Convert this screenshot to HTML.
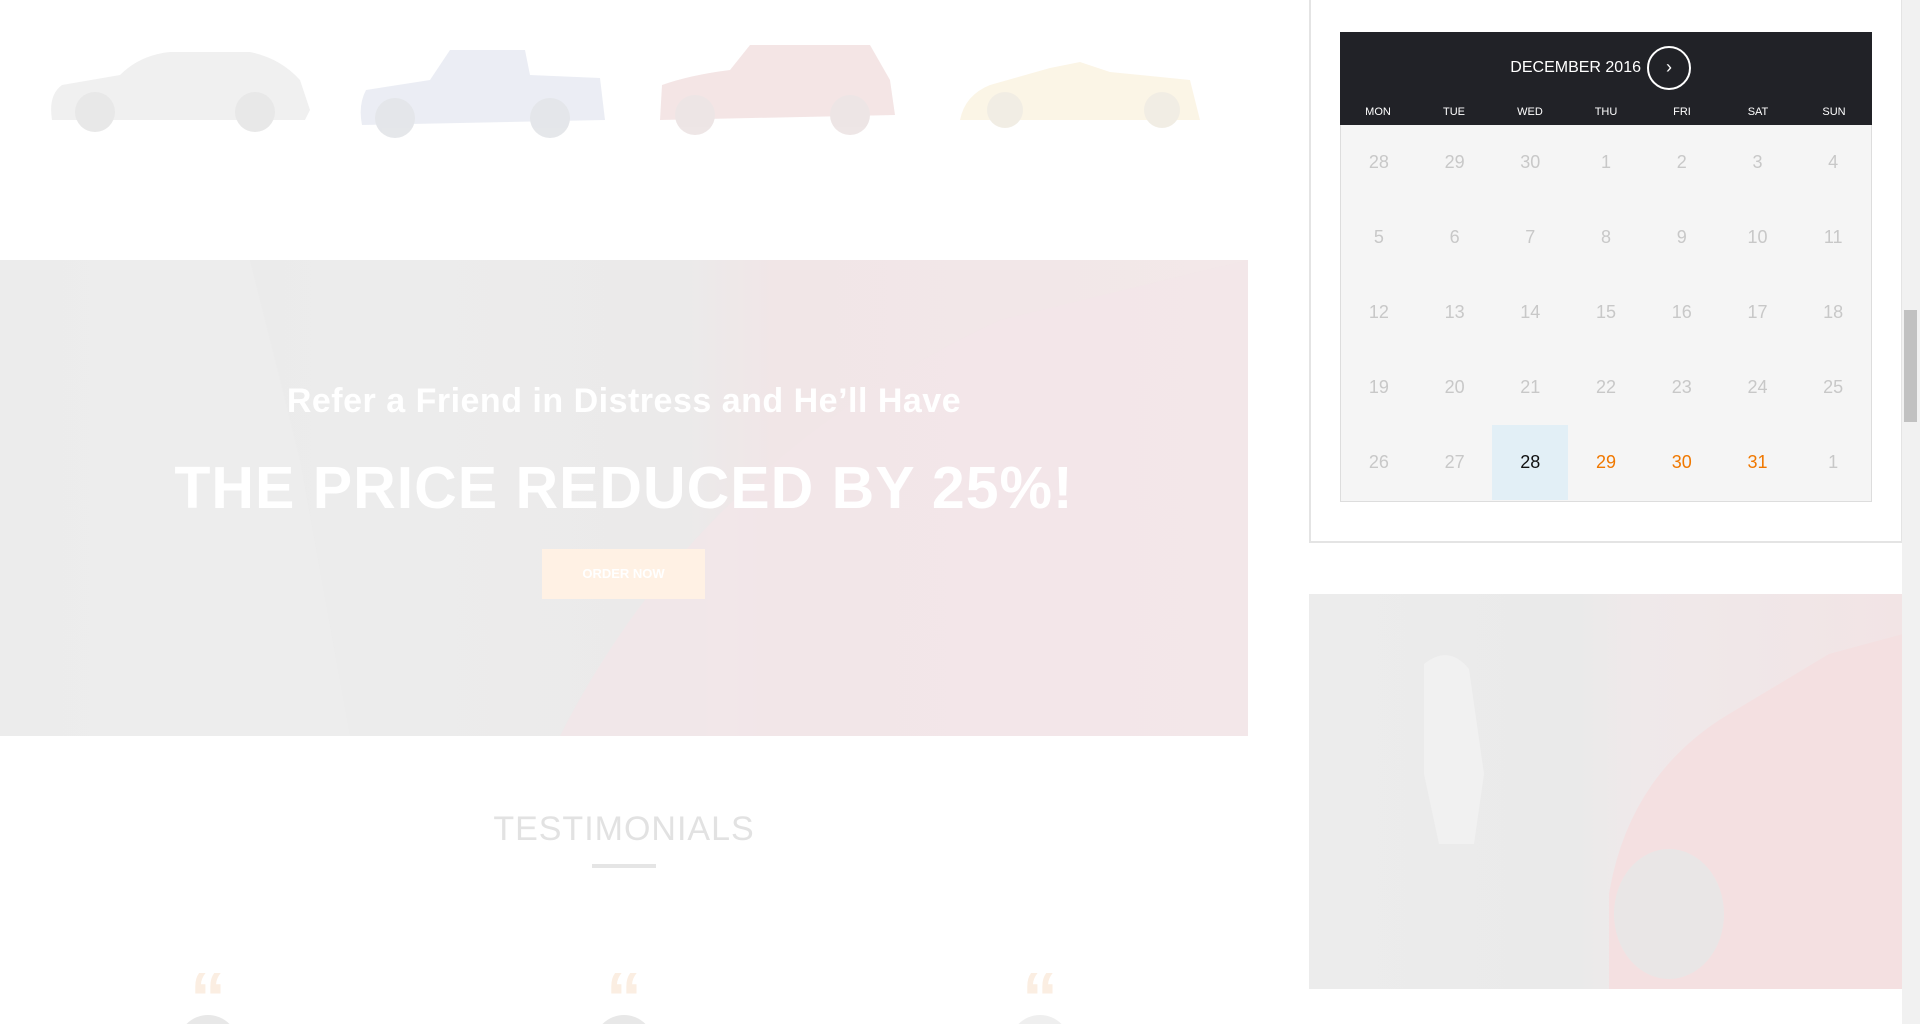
<!DOCTYPE html>
<html><head><meta charset="utf-8"><style>
*{margin:0;padding:0;box-sizing:border-box}
html,body{width:1920px;height:1024px;overflow:hidden}
body{background:#fff;font-family:"Liberation Sans",sans-serif;position:relative}
.abs{position:absolute}
.banner{left:0;top:260px;width:1248px;height:476px;background:linear-gradient(90deg,#e9e9e9 0%,#ececec 30%,#ebeaea 55%,#f1e6e7 62%,#f3e8e9 100%);overflow:hidden}
.t1{left:0;width:1248px;top:382px;text-align:center;color:#fff;font-size:34px;font-weight:bold;letter-spacing:0.5px}
.t2{left:0;width:1248px;top:454px;text-align:center;color:#fff;font-size:59px;font-weight:bold;letter-spacing:1px}
.btn{left:542px;top:549px;width:163px;height:50px;background:#fff1e4;color:#fff;font-size:13px;font-weight:bold;text-align:center;line-height:50px}
.test{left:0;width:1248px;top:810px;text-align:center;font-size:34px;color:#e2e2e2;letter-spacing:1px}
.uline{left:592px;top:864px;width:64px;height:4px;background:#e5e5e5}
.q{font-size:72px;font-weight:bold;color:#fbeee2;top:963px;font-family:"Liberation Sans",sans-serif;line-height:1}
.av{width:60px;height:60px;border-radius:50%;background:#e8e8e8;top:1015px}
.box{left:1309px;top:0;width:594px;height:543px;border:2px solid #e4e4e4;border-top:none}
.cal{left:1340px;top:32px;width:532px}
.hd{background:#212227;height:93px;position:relative;color:#fff}
.mon{position:absolute;left:0;width:301px;top:27px;text-align:right;font-size:16px}
.circ{position:absolute;left:307px;top:14px;width:44px;height:44px;border:2px solid #fff;border-radius:50%;text-align:center;line-height:38px;font-size:18px}
.dn{position:absolute;top:74px;left:0;width:100%;display:flex;font-size:11px}
.dn div,.row div{flex:1;text-align:center}
.grid{background:#f5f5f5;border:1px solid #ddd;border-top:none;height:377px}
.row{display:flex;height:75px;line-height:75px;font-size:18px;color:#c8c8c8}
.row .sel{background:#e2eff6;color:#111}
.row .o{color:#f07800}
.img{left:1309px;top:594px;width:594px;height:395px;background:linear-gradient(90deg,#ececec 0%,#eaeaea 45%,#efe9ea 55%,#f2e4e5 100%);overflow:hidden}
.sb{left:1902px;top:0;width:18px;height:1024px;background:#f1f1f1}
.th{left:1904px;top:310px;width:13px;height:112px;background:#c1c1c1}
</style></head><body>
<svg class="abs" style="left:0;top:0" width="1250" height="180">
<g opacity="0.9">
<path d="M52 120 Q48 95 62 85 L120 75 Q140 55 170 52 L250 52 Q280 58 300 80 L310 110 L305 120 Z" fill="#efefef"/>
<ellipse cx="95" cy="112" rx="20" ry="20" fill="#e6e6e6"/><ellipse cx="255" cy="112" rx="20" ry="20" fill="#e6e6e6"/>
<path d="M362 125 Q358 105 366 90 L430 80 L450 50 L525 50 L530 75 L600 78 L605 120 Z" fill="#e9ecf3"/>
<ellipse cx="395" cy="118" rx="20" ry="20" fill="#e2e4e8"/><ellipse cx="550" cy="118" rx="20" ry="20" fill="#e2e4e8"/>
<path d="M660 120 L662 85 Q690 75 730 70 L750 45 L870 45 L890 80 L895 115 Z" fill="#f3e3e3"/>
<ellipse cx="695" cy="115" rx="20" ry="20" fill="#ece3e3"/><ellipse cx="850" cy="115" rx="20" ry="20" fill="#ece3e3"/>
<path d="M960 120 Q965 95 990 85 L1050 68 L1080 62 L1110 72 L1190 80 L1200 120 Z" fill="#fbf4e4"/>
<ellipse cx="1005" cy="110" rx="18" ry="18" fill="#f0ece2"/><ellipse cx="1162" cy="110" rx="18" ry="18" fill="#f0ece2"/>
</g></svg>
<div class="abs banner">
<svg width="1248" height="476"><path d="M0 0 L250 0 L300 200 L350 476 L0 476 Z" fill="#efefef" opacity="0.6"/><path d="M560 476 Q700 200 1000 60 L1248 0 L1248 476 Z" fill="#f3e6e8" opacity="0.8"/></svg>
</div>
<div class="abs t1">Refer a Friend in Distress and He’ll Have</div>
<div class="abs t2">THE PRICE REDUCED BY 25%!</div>
<div class="abs btn">ORDER NOW</div>
<div class="abs test">TESTIMONIALS</div>
<div class="abs uline"></div>
<div class="abs q" style="left:190px">“</div><div class="abs q" style="left:606px">“</div><div class="abs q" style="left:1022px">“</div>
<div class="abs av" style="left:178px"></div><div class="abs av" style="left:594px"></div><div class="abs av" style="left:1010px;background:#efefef"></div>
<div class="abs box"></div>
<div class="abs cal">
<div class="hd"><div class="mon">DECEMBER 2016</div><div class="circ">›</div>
<div class="dn"><div>MON</div><div>TUE</div><div>WED</div><div>THU</div><div>FRI</div><div>SAT</div><div>SUN</div></div></div>
<div class="grid">
<div class="row"><div>28</div><div>29</div><div>30</div><div>1</div><div>2</div><div>3</div><div>4</div></div>
<div class="row"><div>5</div><div>6</div><div>7</div><div>8</div><div>9</div><div>10</div><div>11</div></div>
<div class="row"><div>12</div><div>13</div><div>14</div><div>15</div><div>16</div><div>17</div><div>18</div></div>
<div class="row"><div>19</div><div>20</div><div>21</div><div>22</div><div>23</div><div>24</div><div>25</div></div>
<div class="row"><div>26</div><div>27</div><div class="sel">28</div><div class="o">29</div><div class="o">30</div><div class="o">31</div><div>1</div></div>
</div></div>
<div class="abs img"><svg width="594" height="395"><path d="M300 395 L300 300 Q320 180 420 120 L520 60 L594 40 L594 395 Z" fill="#f4e0e1"/><ellipse cx="360" cy="320" rx="55" ry="65" fill="#e9e6e6"/><path d="M115 70 Q140 50 160 75 L175 180 L165 250 L130 250 L115 180 Z" fill="#f1f1f1"/></svg></div>
<div class="abs sb"></div><div class="abs th"></div>
</body></html>
